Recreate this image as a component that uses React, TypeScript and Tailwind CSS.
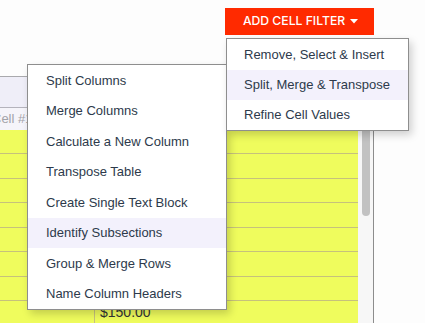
import React from "react";

const menu2 = [
  "Split Columns",
  "Merge Columns",
  "Calculate a New Column",
  "Transpose Table",
  "Create Single Text Block",
  "Identify Subsections",
  "Group & Merge Rows",
  "Name Column Headers",
];

const menu1 = ["Remove, Select & Insert", "Split, Merge & Transpose", "Refine Cell Values"];

export default function App() {
  const rows = [0, 1, 2, 3, 4, 5, 6, 7];
  return (
    <div className="relative h-[323px] w-[425px] overflow-hidden bg-[#fdfdfd] font-['Liberation_Sans','Inter',sans-serif]">
      <div className="flex pl-[225px] pt-[8px]">
        <button className="flex h-[27px] w-[149px] items-center justify-center gap-[5px] bg-[#ff2a00] pl-[2px] font-['Inter','Liberation_Sans',sans-serif] text-[12.2px] font-medium text-white">
          <span>ADD CELL FILTER</span>
          <svg width="8" height="5" viewBox="0 0 8 5">
            <path d="M0 0 L8 0 L4 4.5 Z" fill="white" />
          </svg>
        </button>
      </div>

      <div className="mt-[41px] flex w-[374px]">
        <div className="flex flex-1 flex-col border-t border-[#a9a9ad]">
          <div className="h-[31px] border-b border-[#b4b3bc] bg-[#efeef8]" />
          <div className="flex h-[22px] items-center bg-[#f5f4fa]">
            <span className="ml-[-8px] text-[13px] text-[#a3a3a8]">Cell #1</span>
          </div>
          {rows.map((i) => (
            <div key={i} className="flex h-[24.43px] shrink-0 border-b border-[#c6c17c] bg-[#effc5d]">
              <div className="w-[95px] border-r border-[#c6c17c]" />
              <div className="flex flex-1 items-center pl-[5px] text-[14px] text-[#333]">
                {i === 7 ? "$150.00" : ""}
              </div>
            </div>
          ))}
        </div>
        <div className="w-[16px] border-r border-[#8d8d8d] bg-[#f7f7f7]">
          <div className="ml-[4px] mt-[4px] h-[136px] w-[8px] rounded-full bg-[#c2c2c2]" />
        </div>
      </div>

      <div className="absolute left-[27px] top-[64px] w-[200px] border border-[#8e8e8e] bg-white shadow-[3px_4px_8px_rgba(0,0,0,0.18)]">
        {menu2.map((t) => (
          <div
            key={t}
            className={`flex h-[30.5px] items-center pl-[18px] text-[13px] text-[#2d3a4b] ${
              t === "Identify Subsections" ? "bg-[#f3f1fc]" : ""
            }`}
          >
            {t}
          </div>
        ))}
      </div>

      <div className="absolute left-[226px] top-[38px] w-[183px] border border-[#8e8e8e] bg-white shadow-[3px_4px_8px_rgba(0,0,0,0.18)]">
        <div className="pt-[1px]">
          {menu1.map((t) => (
            <div
              key={t}
              className={`flex h-[30px] items-center pl-[17px] text-[13px] text-[#2d3a4b] ${
                t === "Split, Merge & Transpose" ? "bg-[#f3f1fc]" : ""
              }`}
            >
              {t}
            </div>
          ))}
        </div>
      </div>
    </div>
  );
}
